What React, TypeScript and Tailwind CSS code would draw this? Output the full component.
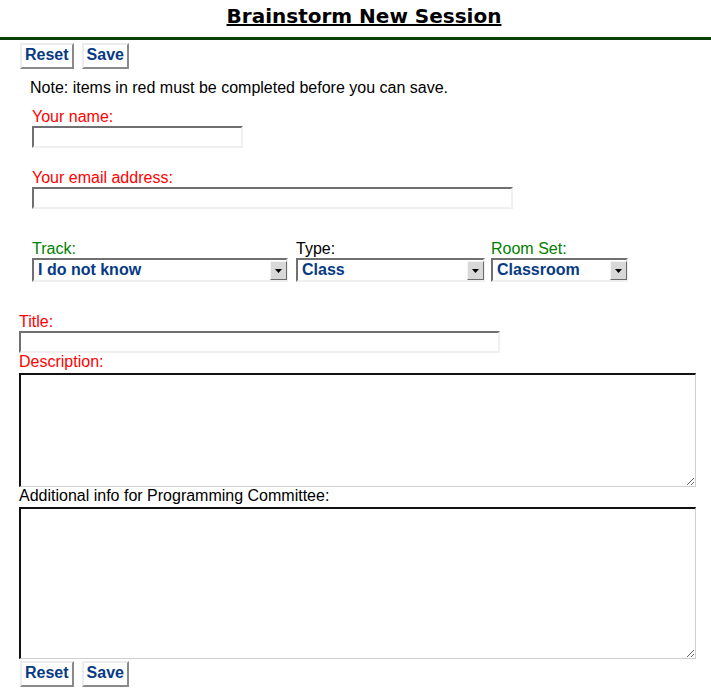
import React from 'react';

const sans = "font-['Liberation_Sans',Arial,sans-serif]";
const label = 'text-[16px] leading-[18px]';
const inset = 'border-2 border-t-[#707070] border-l-[#707070] border-b-[#f0f0f0] border-r-[#f0f0f0] bg-white outline-none';

const FormButton: React.FC<{ text: string }> = ({ text }) => (
  <button
    type="button"
    className="h-[26px] px-[3px] pb-[2px] bg-white border-2 border-t-[#ececec] border-l-[#ececec] border-b-[#8a8a8a] border-r-[#8a8a8a] text-[16px] leading-[18px] font-bold text-[#073a84]"
  >
    {text}
  </button>
);

const ButtonRow: React.FC<{ className?: string }> = ({ className }) => (
  <div className={`flex gap-[8px] pl-[20px] ${className ?? ''}`}>
    <FormButton text="Reset" />
    <FormButton text="Save" />
  </div>
);

interface SelectProps {
  width: string;
  value: string;
  options: string[];
}

const Select: React.FC<SelectProps> = ({ width, value, options }) => (
  <div className={`relative ${width} h-[24px]`}>
    <select
      defaultValue={value}
      className={`appearance-none w-full h-full ${inset} pl-[4px] text-[16px] leading-[18px] font-bold text-[#073a84]`}
    >
      {options.map(o => (
        <option key={o}>{o}</option>
      ))}
    </select>
    <span className="absolute top-[3px] right-[1px] w-[17px] h-[19px] bg-[#d8d8d8] border border-t-[#f4f4f4] border-l-[#f4f4f4] border-b-[#6a6a6a] border-r-[#6a6a6a] flex items-center justify-center pointer-events-none">
      <svg width="7" height="4" viewBox="0 0 7 4">
        <path d="M0 0 H7 L3.5 4 Z" fill="#000" />
      </svg>
    </span>
  </div>
);

const textarea =
  'block w-[677px] bg-white border-t-2 border-l-2 border-t-[#111] border-l-[#111] border-r border-b border-r-[#cfcfcf] border-b-[#cfcfcf] outline-none';

export default function App() {
  return (
    <div className={`${sans} bg-white text-black w-[711px] h-[688px] overflow-hidden`}>
      <div className="pt-[4px] pb-[9px] pl-[17px] border-b-[3px] border-[#084008] text-center">
        <h1 className="font-['DejaVu_Sans',Verdana,sans-serif] font-bold text-[20px] leading-[24px] underline">
          Brainstorm New Session
        </h1>
      </div>

      <ButtonRow className="mt-[3px]" />

      <p className={`${label} mt-[10px] pl-[30px]`}>Note: items in red must be completed before you can save.</p>

      <div className="pl-[32px]">
        <div className={`${label} mt-[11px] text-[#ff0000]`}>Your name:</div>
        <input className={`block w-[211px] h-[22px] ${inset}`} />

        <div className={`${label} mt-[21px] text-[#ff0000]`}>Your email address:</div>
        <input className={`block w-[481px] h-[22px] ${inset}`} />

        <div className="flex mt-[31px]">
          <div className="mr-[8px]">
            <div className={`${label} text-[#008000]`}>Track:</div>
            <Select width="w-[256px]" value="I do not know" options={['I do not know', 'Programming', 'Costuming', 'Science']} />
          </div>
          <div className="mr-[6px]">
            <div className={label}>Type:</div>
            <Select width="w-[189px]" value="Class" options={['Class', 'Panel', 'Workshop']} />
          </div>
          <div>
            <div className={`${label} text-[#008000]`}>Room Set:</div>
            <Select width="w-[137px]" value="Classroom" options={['Classroom', 'Theater', 'Panel']} />
          </div>
        </div>
      </div>

      <div className="pl-[19px]">
        <div className={`${label} mt-[31px] text-[#ff0000]`}>Title:</div>
        <input className={`block w-[481px] h-[22px] ${inset}`} />

        <div className={`${label} text-[#ff0000]`}>Description:</div>
        <textarea className={`${textarea} mt-[2px] h-[114px]`} />

        <div className={label}>Additional info for Programming Committee:</div>
        <textarea className={`${textarea} mt-[2px] h-[152px]`} />
      </div>

      <ButtonRow className="mt-[2px]" />
    </div>
  );
}
